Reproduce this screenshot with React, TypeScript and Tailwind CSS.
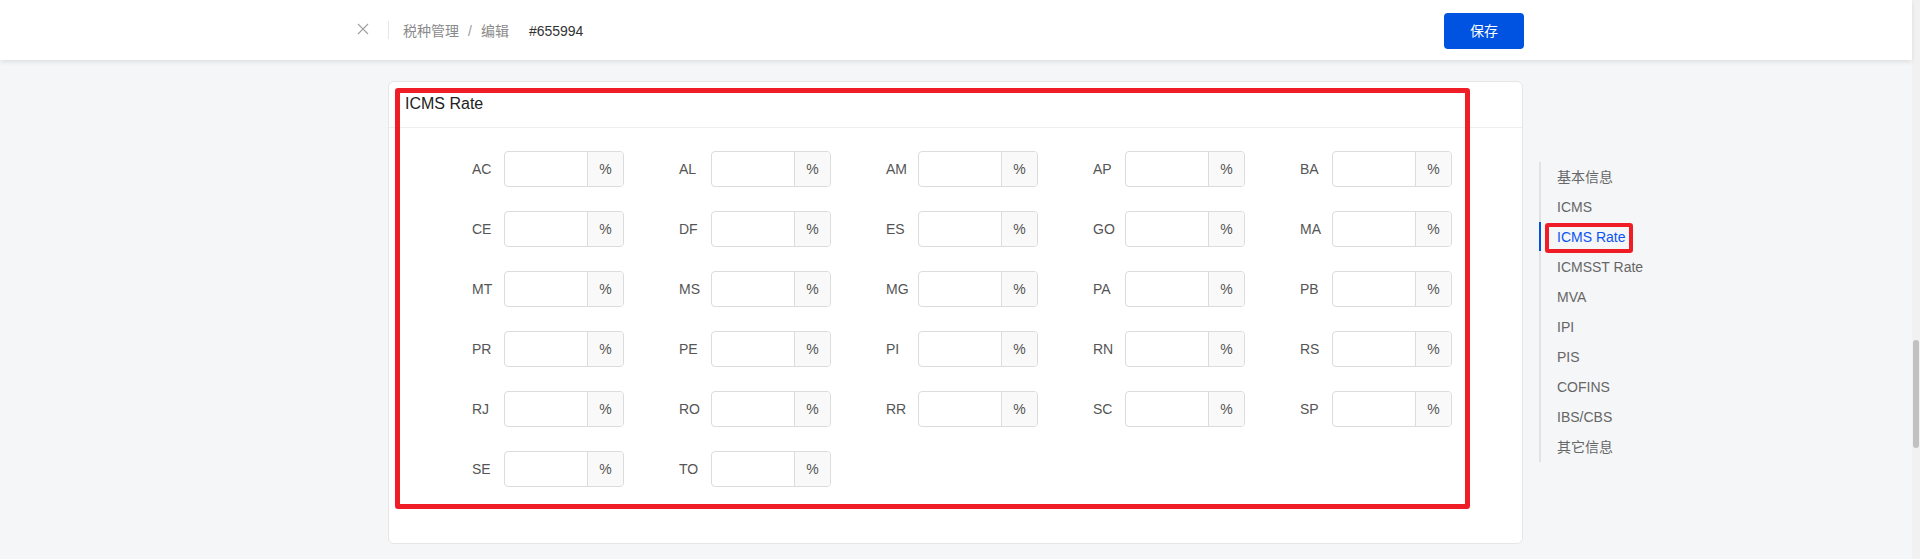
const rows = [
  ["AC", "AL", "AM", "AP", "BA"],
  ["CE", "DF", "ES", "GO", "MA"],
  ["MT", "MS", "MG", "PA", "PB"],
  ["PR", "PE", "PI", "RN", "RS"],
  ["RJ", "RO", "RR", "SC", "SP"],
  ["SE", "TO"],
];

const navItems = ["基本信息", "ICMS", "ICMS Rate", "ICMSST Rate", "MVA", "IPI", "PIS", "COFINS", "IBS/CBS", "其它信息"];

function RateField({ code }: { code: string }) {
  return (
    <div className="flex items-center h-[36px]">
      <span className="w-[32px] text-[14px] text-[#555]">{code}</span>
      <div className="flex w-[120px] h-[36px] border border-[#dcdcdc] rounded-[4px] overflow-hidden bg-white">
        <input className="flex-1 min-w-0 outline-none px-2 text-[14px]" />
        <span className="w-[36px] flex items-center justify-center border-l border-[#dcdcdc] bg-[#f9f9f9] text-[14px] text-[#555]">
          %
        </span>
      </div>
    </div>
  );
}

export default function App() {
  return (
    <div
      className="w-[1920px] h-[559px] overflow-hidden flex bg-[#f5f6f8]"
      style={{ fontFamily: '"Liberation Sans", "Noto Sans CJK SC", sans-serif' }}
    >
      <div className="w-[1912px] flex flex-col">
        <header className="h-[60px] bg-white shadow-[0_2px_5px_rgba(0,0,0,0.09)] flex items-center relative z-10 shrink-0">
          <div className="ml-[357px] flex items-center">
            <svg width="12" height="12" viewBox="0 0 12 12" className="mt-[-3px]">
              <path d="M1 1L11 11M11 1L1 11" stroke="#a0a0a0" strokeWidth="1.1" />
            </svg>
            <div className="ml-[19px] w-px h-[18px] bg-[#e6e6e6]" />
            <div className="ml-[14px] flex items-center text-[14px] mt-[2px]">
              <span className="text-[#8a8a8a]">税种管理</span>
              <span className="text-[#9a9a9a] mx-[9px]">/</span>
              <span className="text-[#8a8a8a]">编辑</span>
              <span className="ml-[20px] text-[#333]">#655994</span>
            </div>
          </div>
          <button className="ml-auto mr-[388px] w-[80px] h-[36px] rounded-[4px] bg-[#0052e0] text-white text-[14px] mt-[2px]">
            保存
          </button>
        </header>

        <div className="flex pt-[21px]">
          <div className="ml-[388px] w-[1135px] h-[463px] bg-white border border-[#e6e6e6] rounded-[6px] relative shrink-0">
            <div className="h-[46px] pl-[16px] pt-[11px] border-b border-[#eeeeee] text-[16px] text-[#222] leading-[22px]">
              ICMS Rate
            </div>
            <div className="pl-[83px] pt-[23px] flex flex-col gap-[24px]">
              {rows.map((row, i) => (
                <div key={i} className="grid grid-cols-[repeat(5,207px)]">
                  {row.map((code) => (
                    <RateField key={code} code={code} />
                  ))}
                </div>
              ))}
            </div>
            <div className="absolute left-[6px] top-[6px] w-[1075px] h-[421px] border-[5px] border-[#ee1d26] rounded-[3px] pointer-events-none" />
          </div>

          <nav className="ml-[16px] mt-[81px] border-l-2 border-[#e2e2e2] h-[300px]">
            {navItems.map((item) => {
              const active = item === "ICMS Rate";
              return (
                <div key={item} className="relative h-[30px] flex items-center pl-[16px] text-[14px]">
                  {active && (
                    <>
                      <span className="absolute left-[-2px] top-[0px] w-[2px] h-[29px] bg-[#0052e0]" />
                      <span className="absolute left-[4px] top-[1px] w-[88px] h-[30px] border-4 border-[#ee1d26] rounded-[3px]" />
                    </>
                  )}
                  <span className={active ? "text-[#0a55f0]" : "text-[#666]"}>{item}</span>
                </div>
              );
            })}
          </nav>
        </div>
      </div>

      <div className="w-[8px] bg-[#f1f1f1] pt-[340px] flex justify-center">
        <div className="w-[6px] h-[108px] rounded-full bg-[#c1c1c1]" />
      </div>
    </div>
  );
}
